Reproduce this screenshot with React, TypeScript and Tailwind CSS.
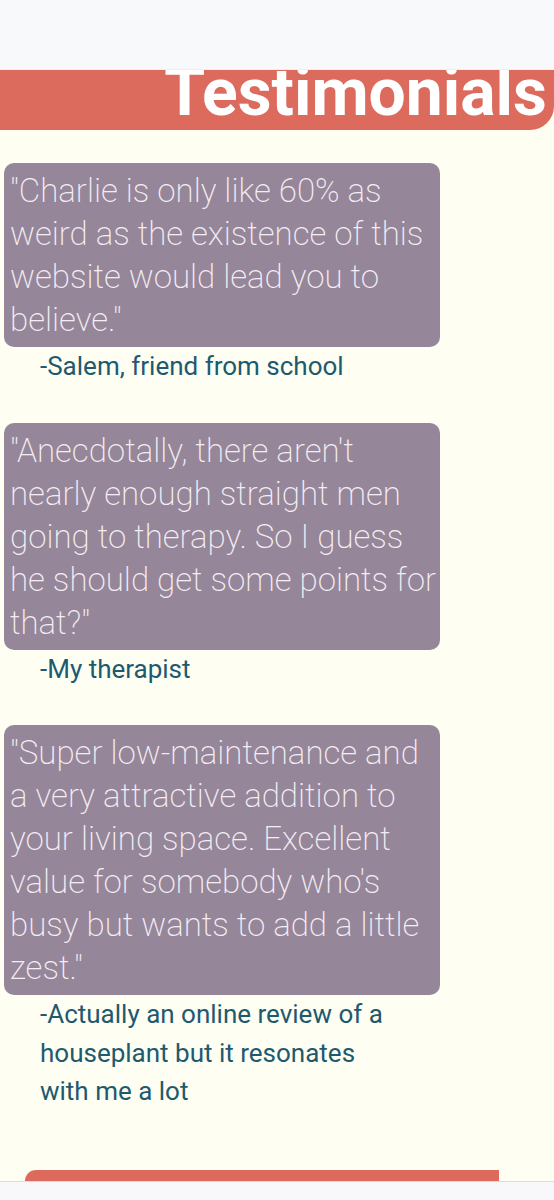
const testimonials = [
  {
    quote:
      '"Charlie is only like 60% as weird as the existence of this website would lead you to believe."',
    author: "-Salem, friend from school",
  },
  {
    quote:
      '"Anecdotally, there aren\'t nearly enough straight men going to therapy. So I guess he should get some points for that?"',
    author: "-My therapist",
  },
  {
    quote:
      '"Super low-maintenance and a very attractive addition to your living space. Excellent value for somebody who\'s busy but wants to add a little zest."',
    author:
      "-Actually an online review of a houseplant but it resonates with me a lot",
  },
];

function TestimonialCard({ quote, author }: { quote: string; author: string }) {
  return (
    <div className="w-[436px] mb-[37px]">
      <div className="bg-[#968699] rounded-[10px] pl-[6px] pr-[1px] py-[6px]">
        <p className="text-[33px] leading-[43px] font-extralight text-[#f4eef4]">
          {quote}
        </p>
      </div>
      <p className="pl-[36px] pr-[30px] text-[26px] leading-[38.5px] text-[#1d5a70]">
        {author}
      </p>
    </div>
  );
}

export default function App() {
  return (
    <div className="min-h-screen bg-[#fefef2] font-['Roboto',sans-serif] flex flex-col">
      <div className="h-[70px] bg-[#f8f9fa] border-b border-[#eceef0]" />
      <div className="h-[60px] bg-[#dc6b5e] rounded-br-[24px] overflow-hidden flex justify-end items-start">
        <h2 className="mt-[-10px] pr-[7px] text-[66px] leading-none font-bold text-white">
          Testimonials
        </h2>
      </div>
      <div className="pl-1 pt-[33px]">
        {testimonials.map((t) => (
          <TestimonialCard key={t.author} quote={t.quote} author={t.author} />
        ))}
      </div>
      <div className="mt-auto">
        <div className="ml-[25px] w-[474px] h-[11px] bg-[#dc6b5e] rounded-tl-[40px]" />
        <div className="h-[19px] bg-[#f8f8fa] border-t border-[#dcdcdc]" />
      </div>
    </div>
  );
}
